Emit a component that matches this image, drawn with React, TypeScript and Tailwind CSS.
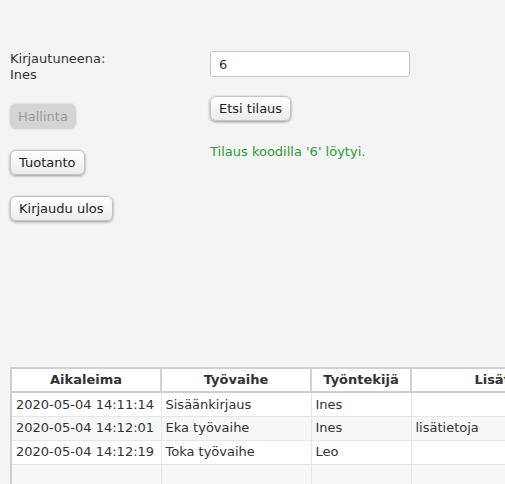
import React from 'react';

const rows = [
  { time: '2020-05-04 14:11:14', phase: 'Sisäänkirjaus', worker: 'Ines', info: '' },
  { time: '2020-05-04 14:12:01', phase: 'Eka työvaihe', worker: 'Ines', info: 'lisätietoja' },
  { time: '2020-05-04 14:12:19', phase: 'Toka työvaihe', worker: 'Leo', info: '' },
  { time: '', phase: '', worker: '', info: '' },
];

const btn =
  'h-[25px] px-[8px] rounded-[6px] border border-[#c4c4c4] bg-gradient-to-b from-white to-[#ececec] text-[#222] shadow-[0_1px_3px_rgba(0,0,0,0.4)] leading-none';

const App: React.FC = () => {
  return (
    <div className="min-h-screen w-full overflow-hidden bg-[#f4f4f4] text-[13px] text-[#333] font-['DejaVu_Sans',sans-serif]">
      <div className="flex pt-[51px] pl-[10px]">
        <div className="w-[200px] flex flex-col items-start">
          <p className="leading-[16px] text-[#333]">
            Kirjautuneena:
            <br />
            Ines
          </p>
          <button
            disabled
            className="mt-[21px] h-[25px] px-[8px] rounded-[6px] bg-[#d4d4d4] text-[#999] shadow-[0_0_3px_rgba(0,0,0,0.15)] leading-none"
          >
            Hallinta
          </button>
          <button className={`mt-[21px] ${btn}`}>Tuotanto</button>
          <button className={`mt-[21px] ${btn}`}>Kirjaudu ulos</button>
        </div>
        <div className="flex flex-col items-start">
          <input
            defaultValue="6"
            className="w-[200px] h-[26px] px-[8px] rounded-[3px] border border-[#c8c8c8] bg-white text-[#333] outline-none"
          />
          <button className={`mt-[19px] ${btn}`}>Etsi tilaus</button>
          <p className="mt-[23px] leading-[16px] text-[#2e9a3a]">Tilaus koodilla '6' löytyi.</p>
        </div>
      </div>
      <div className="pl-[10px] mt-[146px]">
        <table className="w-[600px] table-fixed border-collapse border-l-2 border-[#d0d0d0] bg-white">
          <colgroup>
            <col className="w-[150px]" />
            <col className="w-[150px]" />
            <col className="w-[100px]" />
            <col className="w-[200px]" />
          </colgroup>
          <thead>
            <tr className="h-[24px]">
              {['Aikaleima', 'Työvaihe', 'Työntekijä', 'Lisätiedot'].map((h) => (
                <th key={h} className="border-2 border-[#d0d0d0] font-bold text-center text-[#333] p-0">
                  {h}
                </th>
              ))}
            </tr>
          </thead>
          <tbody>
            {rows.map((r, i) => (
              <tr key={i} className={`h-[24px] ${i % 2 === 1 ? 'bg-[#f7f7f7]' : 'bg-white'}`}>
                <td className="border border-[#e6e6e6] border-l-0 px-[4px] whitespace-nowrap">{r.time}</td>
                <td className="border border-[#e6e6e6] px-[4px] whitespace-nowrap">{r.phase}</td>
                <td className="border border-[#e6e6e6] px-[4px] whitespace-nowrap">{r.worker}</td>
                <td className="border border-[#e6e6e6] px-[4px] whitespace-nowrap">{r.info}</td>
              </tr>
            ))}
          </tbody>
        </table>
      </div>
    </div>
  );
};

export default App;
